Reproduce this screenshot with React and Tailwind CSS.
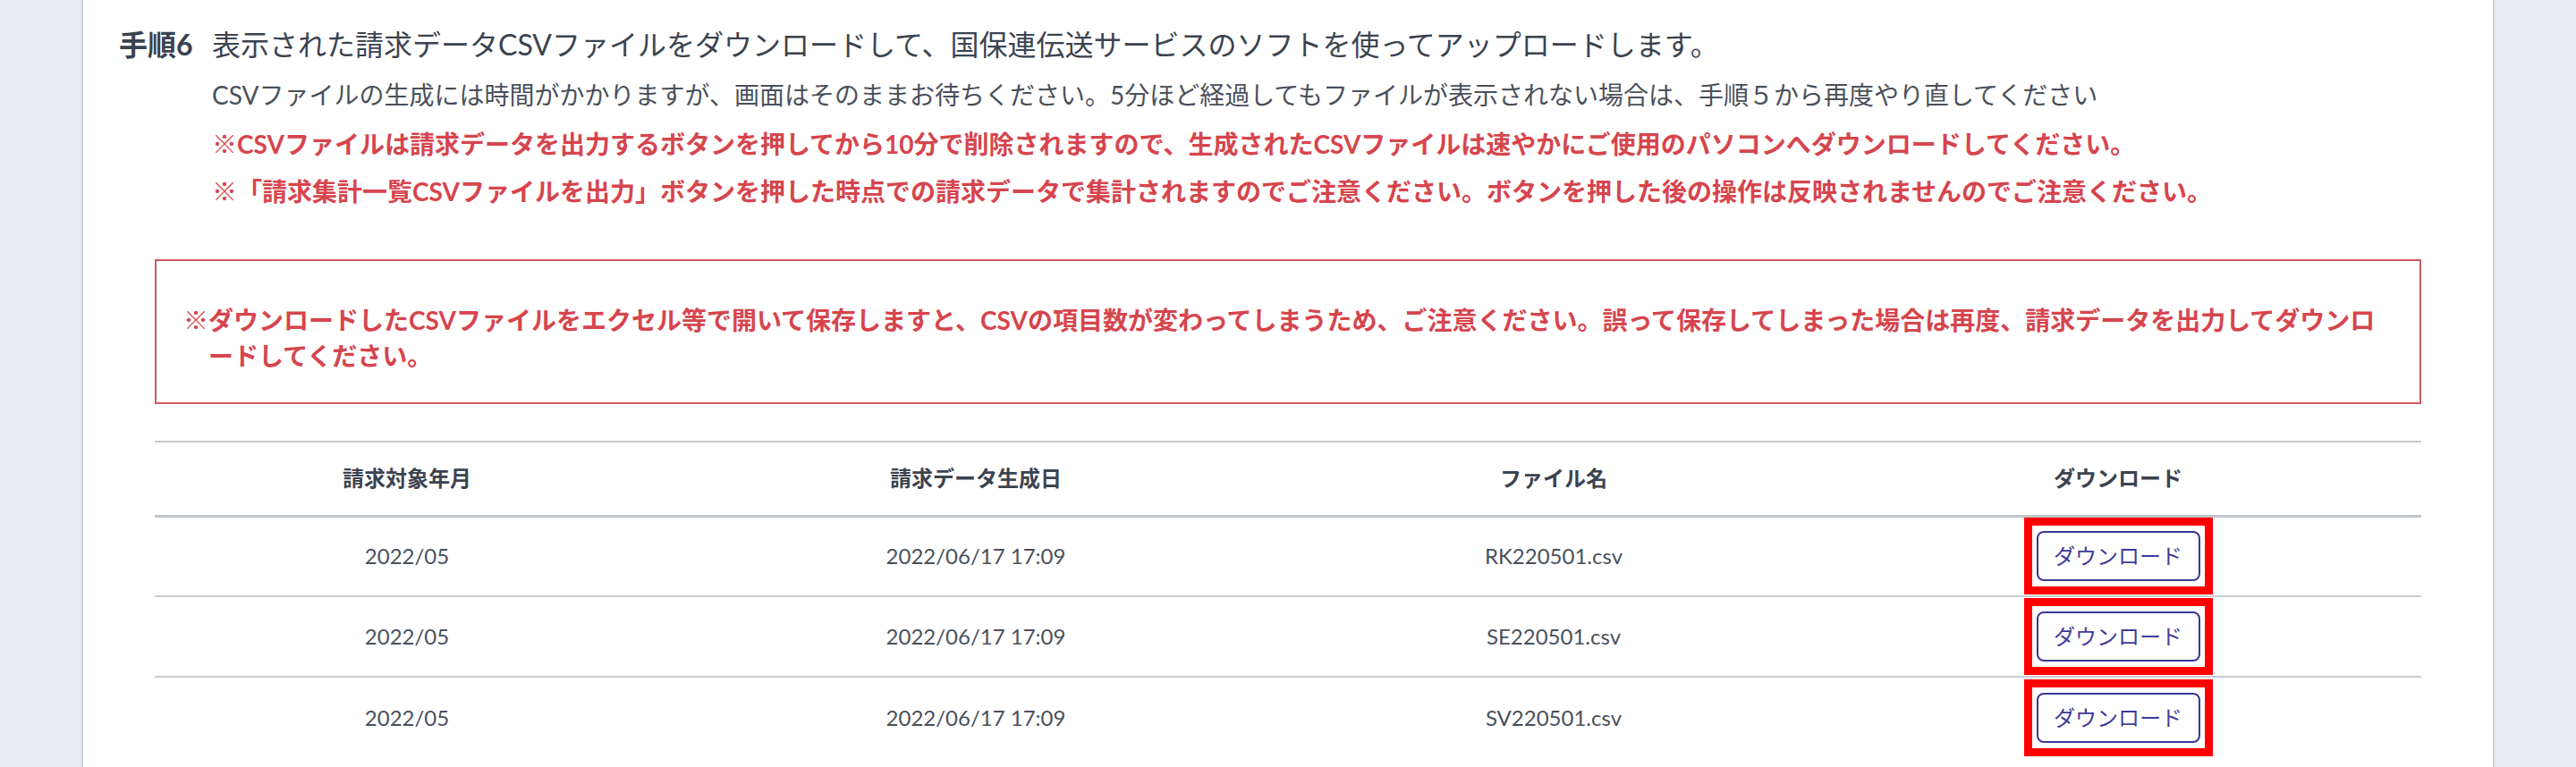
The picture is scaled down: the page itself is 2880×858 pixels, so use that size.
const rows = [
  { month: "2022/05", created: "2022/06/17 17:09", file: "RK220501.csv" },
  { month: "2022/05", created: "2022/06/17 17:09", file: "SE220501.csv" },
  { month: "2022/05", created: "2022/06/17 17:09", file: "SV220501.csv" },
]

const DownloadButton = () => (
  <div className="inline-block border-[9px] border-[#ff0000] bg-white px-[5px] py-[6px]">
    <button className="flex h-[56px] w-[183px] items-center justify-center rounded-[8px] border-2 border-[#3b3598] bg-white text-[24px] text-[#3f3a9a]">
      ダウンロード
    </button>
  </div>
)

export default function App() {
  return (
    <div className="min-h-screen bg-[#e9edf1] px-[91px] font-['Lato','Noto_Sans_CJK_JP',sans-serif]">
      <div className="min-h-screen border-x-2 border-[#c9cfd6] bg-white pt-[22px] pb-10">
        <div className="flex pl-[40px]">
          <span className="w-[104px] shrink-0 text-[32px] font-bold leading-[56px] text-[#39424f]">
            手順6
          </span>
          <div>
            <p className="text-[32px] leading-[56px] text-[#3c4350]">
              表示された請求データCSVファイルをダウンロードして、国保連伝送サービスのソフトを使ってアップロードします。
            </p>
            <p className="text-[28px] leading-[56px] text-[#4a505a]">
              CSVファイルの生成には時間がかかりますが、画面はそのままお待ちください。5分ほど経過してもファイルが表示されない場合は、手順５から再度やり直してください
            </p>
            <p className="text-[28px] font-bold leading-[54px] text-[#d6454d]">
              ※CSVファイルは請求データを出力するボタンを押してから10分で削除されますので、生成されたCSVファイルは速やかにご使用のパソコンへダウンロードしてください。
            </p>
            <p className="text-[28px] font-bold leading-[52px] text-[#d6454d]">
              ※「請求集計一覧CSVファイルを出力」ボタンを押した時点での請求データで集計されますのでご注意ください。ボタンを押した後の操作は反映されませんのでご注意ください。
            </p>
          </div>
        </div>

        <div className="mx-[80px] mt-[50px] border-2 border-[#cf5a61] pt-[46px] pr-[40px] pb-[32px] pl-[30px]">
          <p className="pl-[28px] -indent-[28px] text-[28px] font-bold leading-[40px] text-[#d6454d]">
            ※ダウンロードしたCSVファイルをエクセル等で開いて保存しますと、CSVの項目数が変わってしまうため、ご注意ください。誤って保存してしまった場合は再度、請求データを出力してダウンロードしてください。
          </p>
        </div>

        <div className="px-[80px] pt-[41px]">
          <table className="w-full table-fixed border-collapse border-t-2 border-[#c3c9cc] text-[24px]">
            <colgroup>
              <col className="w-[564px]" />
              <col className="w-[708px]" />
              <col className="w-[584px]" />
              <col />
            </colgroup>
            <thead>
              <tr className="border-b-[3px] border-[#bfc5c9]">
                <th className="h-[83px] p-0 text-center font-bold text-[#3c4350]">請求対象年月</th>
                <th className="h-[83px] p-0 text-center font-bold text-[#3c4350]">請求データ生成日</th>
                <th className="h-[83px] p-0 text-center font-bold text-[#3c4350]">ファイル名</th>
                <th className="h-[83px] p-0 text-center font-bold text-[#3c4350]">ダウンロード</th>
              </tr>
            </thead>
            <tbody>
              {rows.map((row) => (
                <tr key={row.file} className="border-b-2 border-[#c9ced1] last:border-b-0">
                  <td className="h-[90px] p-0 text-center align-middle text-[#4a505a]">{row.month}</td>
                  <td className="h-[90px] p-0 text-center align-middle text-[#4a505a]">{row.created}</td>
                  <td className="h-[90px] p-0 text-center align-middle text-[#4a505a]">{row.file}</td>
                  <td className="h-[90px] p-0 text-center align-middle">
                    <DownloadButton />
                  </td>
                </tr>
              ))}
            </tbody>
          </table>
        </div>
      </div>
    </div>
  )
}
